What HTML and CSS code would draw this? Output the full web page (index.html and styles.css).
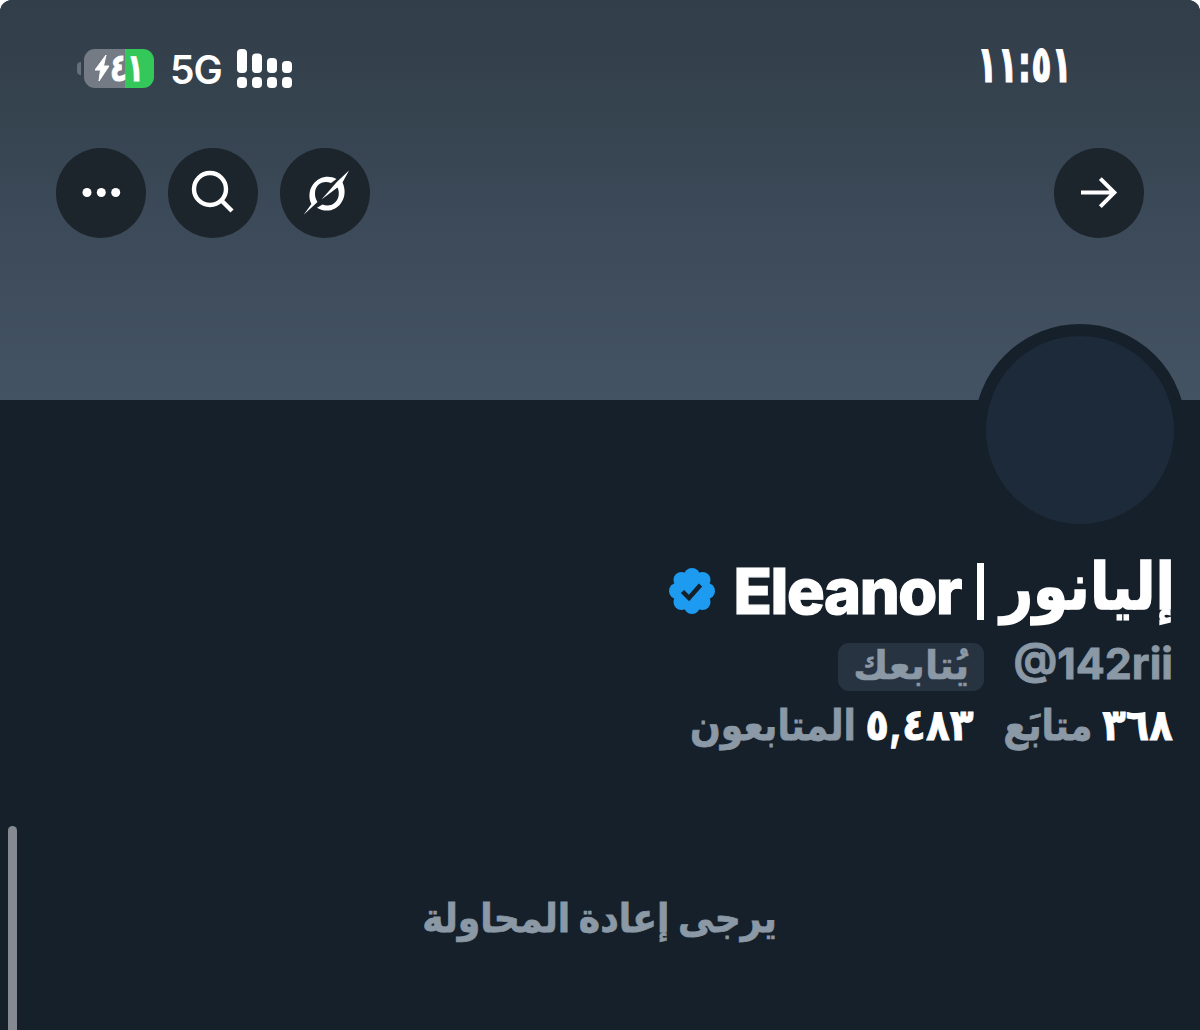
FILE: index.html
```html
<!DOCTYPE html>
<html lang="ar">
<head>
<meta charset="utf-8">
<title>Eleanor</title>
<link rel="stylesheet" href="styles.css">
</head>
<body>
<main class="screen">
  <header class="banner">
    <div class="status">
      <div class="status-left">
        <div class="battery"><svg class="bolt" viewBox="0 0 14 26"><path d="M11 0 0 15h5.500L4 26 14 11H8.500Z"/></svg><span class="level">٤١</span></div>
        <span class="network">5G</span>
        <svg class="signal" viewBox="0 0 55 39"><rect width="10" height="24" rx="4"/><rect x="15" y="4.500" width="10" height="19.500" rx="4"/><rect x="30" y="9" width="10" height="15" rx="4"/><rect x="45" y="12" width="10" height="12" rx="4"/><rect y="28" width="10" height="11" rx="4"/><rect x="15" y="28" width="10" height="11" rx="4"/><rect x="30" y="28" width="10" height="11" rx="4"/><rect x="45" y="28" width="10" height="11" rx="4"/></svg>
      </div>
      <span class="clock"><bdo dir="ltr">١١:٥١</bdo></span>
    </div>
    <nav class="toolbar">
      <button class="round" aria-label="المزيد"><svg viewBox="0 0 90 90"><g fill="#fff"><circle cx="31" cy="44.500" r="4.500"/><circle cx="45.300" cy="44.500" r="4.500"/><circle cx="59.700" cy="44.500" r="4.500"/></g></svg></button>
      <button class="round" aria-label="بحث"><svg viewBox="0 0 90 90" fill="none" stroke="#fff" stroke-width="4.400"><circle cx="42" cy="41" r="16"/><path d="m53 52 11 11"/></svg></button>
      <button class="round" aria-label="Grok"><svg viewBox="0 0 90 90" fill="#fff"><path d="M23.700 66.800 31.400 56C28.500 50.500 28.700 42 33 36.500 38.500 28.500 49 26.600 56.500 31L51 35C43 31.800 35 36.500 35 45.500c0 4.500 1.400 6.200 2.500 8.500Z"/><path d="M69 22.600 62.500 34.500C66 42 65 50 60.700 55.500 55.200 63.300 45 64.600 37 59.700L42.500 56.600C51 60 58.900 54 58.800 45.500c0-2.700-.5-4.200-1.300-6L41.500 51.500 57 33.800Z"/></svg></button>
      <button class="round back" aria-label="رجوع"><svg viewBox="0 0 90 90" fill="none" stroke="#fff" stroke-width="4"><path d="M27 44.600h33M46.300 30.600l14 14-14 14"/></svg></button>
    </nav>
  </header>
  <section class="profile" dir="rtl">
    <div class="avatar"></div>
    <h1 class="name">
      <span class="cell name-ar"><span class="fit">إليانور</span></span>
      <span class="bar"></span>
      <span class="cell name-en"><span class="fit" dir="ltr">Eleanor</span></span>
      <svg class="verified" viewBox="0 0 46 46"><g fill="#1d9bf0"><circle cx="23" cy="23" r="18.500"/><circle cx="23" cy="8" r="8"/><circle cx="33.500" cy="12" r="8"/><circle cx="38" cy="23" r="8"/><circle cx="33.500" cy="34" r="8"/><circle cx="23" cy="38" r="8"/><circle cx="12.500" cy="34" r="8"/><circle cx="8" cy="23" r="8"/><circle cx="12.500" cy="12" r="8"/></g><path d="m13.500 23.500 6.500 6.500 11.500-13" fill="none" stroke="#15202a" stroke-width="4.500"/></svg>
    </h1>
    <div class="handle-row">
      <span class="cell handle"><span class="fit" dir="ltr">@142rii</span></span>
      <span class="follows"><span class="cell follows-text"><span class="fit">يُتابعك</span></span></span>
    </div>
    <div class="stats">
      <span class="cell following-n"><span class="fit">٣٦٨</span></span>
      <span class="cell following"><span class="fit">متابَع</span></span>
      <span class="cell followers-n"><bdo class="fit" dir="ltr">٥,٤٨٣</bdo></span>
      <span class="cell followers"><span class="fit">المتابعون</span></span>
    </div>
  </section>
  <p class="retry" dir="rtl"><span class="cell retry-text"><span class="fit">يرجى إعادة المحاولة</span></span></p>
  <div class="scrollbar"></div>
</main>
</body>
</html>
```
FILE: styles.css
```css
* { box-sizing: border-box; }
body { margin: 0; background: #fff; }
.screen {
  position: relative;
  width: 1200px;
  height: 1030px;
  overflow: hidden;
  border-radius: 12px 12px 0 0;
  background: #15202a;
  color: #fff;
  font-family: Inter, "DejaVu Sans", sans-serif;
  font-weight: 700;
}
.banner {
  height: 400px;
  padding: 44px 56px 0;
  background: linear-gradient(#323e4a 0, #35434f 100px, #3b4958 210px, #445363 400px);
}
.status { display: flex; justify-content: space-between; height: 104.400px; padding: 0 74px 0 28px; }
.status-left { display: flex; align-items: center; height: 48px; }
.battery {
  position: relative;
  display: flex;
  align-items: center;
  width: 70px;
  height: 39px;
  padding-left: 11px;
  border-radius: 11px;
  background: linear-gradient(90deg, #747b84 41px, #34c759 41px);
}
.battery::before {
  content: "";
  position: absolute;
  left: -7px;
  top: 13px;
  width: 4px;
  height: 13px;
  border-radius: 4px 0 0 4px;
  background: #66707b;
}
.bolt { width: 14px; height: 26px; fill: #fff; stroke: #fff; }
.level {
  font: 700 33px/36px "DejaVu Sans", sans-serif;
  transform: translate(1px, 0) scale(.84, 1.16);
  transform-origin: left center;
  -webkit-text-stroke: .8px;
}
.network { width: 52px; margin-left: 16px; padding-top: 3px; font-size: 39px; font-weight: 600; line-height: 45px; letter-spacing: -1px; }
.signal { width: 55px; height: 39px; margin-left: 15px; fill: #fff; }
.clock {
  font: 700 44px/48px "DejaVu Sans", sans-serif;
  transform: translate(2px, 1px) scale(.76, 1.16);
  transform-origin: right center;
  -webkit-text-stroke: 1px;
}
.toolbar { display: flex; gap: 22px; }
.round { width: 90px; height: 90px; padding: 0; border: 0; border-radius: 50%; background: #1c242c; }
.round svg { display: block; width: 90px; height: 90px; }
.back { margin-left: auto; }
.profile { padding: 0 28px 0 0; }
.avatar {
  width: 212px;
  height: 212px;
  margin: -76px -14px 0 0;
  border: 12px solid #15202a;
  border-radius: 50%;
  background: #1d2a39;
}
.cell { display: block; flex: none; white-space: nowrap; }
.fit { display: inline-block; transform-origin: right center; }
.name { display: flex; align-items: center; height: 94px; margin: 8px 0 0; font-size: 63px; line-height: 94px; font-weight: 800; }
.name-ar { width: 174px; }
.name-ar .fit { transform: translate(3px, -5px) scale(.9, 1.02); -webkit-text-stroke: 1.500px; }
.bar { width: 7px; height: 57px; margin: 0 14px 0 16px; background: #fff; }
.name-en { width: 227px; letter-spacing: -1.400px; }
.name-en .fit { transform: none; -webkit-text-stroke: 1.200px; }
.verified { width: 46px; height: 46px; margin-right: 19px; }
.handle-row { display: flex; align-items: center; height: 58px; color: #8b98a5; }
.handle { width: 160px; font-size: 43px; line-height: 54px; }
.handle .fit { transform: translate(1px, -4px); -webkit-text-stroke: .8px; }
.follows { width: 146px; height: 48px; margin-right: 28px; padding-right: 15px; border-radius: 11px; background: #273340; }
.follows-text { width: 113px; font-size: 39px; line-height: 44px; }
.follows-text .fit { transform: scaleX(.98); -webkit-text-stroke: .6px; }
.stats { display: flex; height: 62px; font-size: 42px; line-height: 60px; }
.stats .fit { -webkit-text-stroke: .8px; }
.following-n { width: 70px; }
.following-n .fit { transform: translate(1px, -2px) scale(.92, 1.04); }
.following { width: 88px; margin-right: 11px; color: #8b98a5; }
.following .fit { transform: translate(1px, -1px) scaleX(.863); }
.followers-n { width: 107px; margin-right: 30px; }
.followers-n .fit { transform: translate(1px, -2px) scale(.93, 1.04); }
.followers { width: 165px; margin-right: 11px; color: #8b98a5; }
.followers .fit { transform: translate(1px, -1px) scaleX(.86); }
.retry { display: flex; justify-content: center; margin: 130px 0 0; font-size: 40px; line-height: 64px; color: #8b98a5; }
.retry-text { width: 353px; }
.retry-text .fit { transform: translateY(-2px) scaleX(.905); -webkit-text-stroke: .8px; }
.scrollbar { position: absolute; left: 8px; top: 826px; width: 9px; height: 220px; border-radius: 5px; background: #858a92; }
```
